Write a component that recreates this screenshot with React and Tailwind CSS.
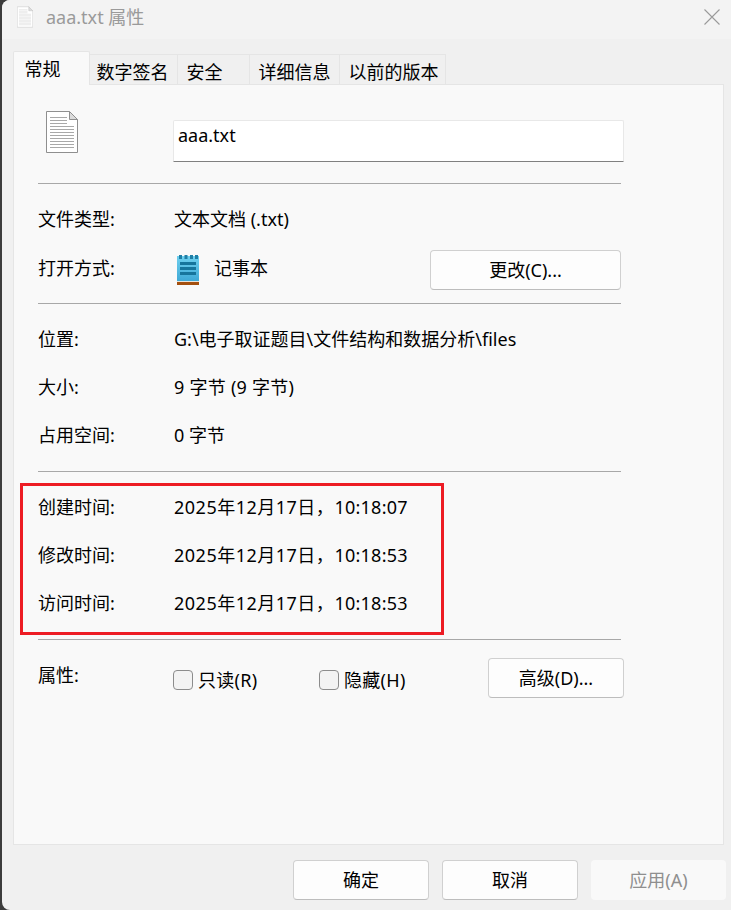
import { useState } from 'react';

const FONT = "font-['Noto_Sans','Noto_Sans_CJK_SC',sans-serif]";

const TABS = [
  { name: '数字签名', w: 'w-[88px]', pad: 'pr-[2px]' },
  { name: '安全', w: 'w-[72px]', pad: 'pr-[18px]' },
  { name: '详细信息', w: 'w-[90px]', pad: '' },
  { name: '以前的版本', w: 'w-[106px]', pad: 'pl-[2px]' },
];

const TIMES = [
  { label: '创建时间:', time: '10:18:07' },
  { label: '修改时间:', time: '10:18:53' },
  { label: '访问时间:', time: '10:18:53' },
];

function FileIcon({ className, color = '#8f8f8f', line = '#a8a8a8' }) {
  return (
    <svg className={className} viewBox="0 0 32 42" fill="none">
      <path d="M.5.5h23l8 8v33H.5z" fill="#fff" stroke={color} />
      <path d="M23.5.5v8h8z" fill="#dcdcdc" stroke={color} />
      {[6, 9, 12].map((y) => (
        <path key={y} d={`M4 ${y}.5h17`} stroke={line} />
      ))}
      {[15, 18, 21, 24, 27, 30, 33, 36].map((y) => (
        <path key={y} d={`M4 ${y}.5h24`} stroke={line} />
      ))}
    </svg>
  );
}

function NotepadIcon() {
  return (
    <svg className="ml-[3px] h-[30px] w-[23px] shrink-0" viewBox="0 0 23 30" fill="none">
      <defs>
        <linearGradient id="pad" x1="0" y1="0" x2="0" y2="1">
          <stop offset="0" stopColor="#6fd0ef" />
          <stop offset="1" stopColor="#3fa9d6" />
        </linearGradient>
      </defs>
      <rect x="0" y="1" width="22" height="25" fill="url(#pad)" />
      <path d="M2 0h3v4H2zM7.500 0h3v4h-3zM13 0h3v4h-3zM18 0h3v4h-3z" fill="#1f7fa6" />
      <path d="M3 7h16v3H3zM3 12h16v3H3zM3 17h16v3H3z" fill="#17759c" />
      <rect x="0" y="26" width="22" height="1" fill="#e8e4dc" />
      <rect x="0" y="27" width="22" height="3" fill="#a4500f" />
    </svg>
  );
}

function Button({ children, className = '' }) {
  return (
    <button
      type="button"
      className={`flex h-10 items-center justify-center rounded-[4px] border border-[#d0d0d0] border-b-[#bdbdbd] bg-[#fdfdfd] text-black ${className}`}
    >
      {children}
    </button>
  );
}

function Row({ label, children }) {
  return (
    <div className="flex h-12 items-center">
      <span className="w-[136px] shrink-0">{label}</span>
      <span>{children}</span>
    </div>
  );
}

function Check({ label, className = '' }) {
  const [checked, setChecked] = useState(false);
  return (
    <label className={`flex items-center gap-[5px] tracking-[0.3px] ${className}`}>
      <input
        type="checkbox"
        checked={checked}
        onChange={(e) => setChecked(e.target.checked)}
        className="h-5 w-5 appearance-none rounded-[4px] border border-[#8c8c8c] bg-[#f3f3f3]"
      />
      {label}
    </label>
  );
}

const Divider = () => <div className="h-px bg-[#a8a8a8]" />;

export default function App() {
  return (
    <div className={`h-[910px] w-[731px] overflow-hidden bg-[#3c3c3c] pl-[2px] text-[18px] leading-6 text-black ${FONT}`}>
      <div className="flex h-full flex-col rounded-l-lg bg-[#f0f0f0]">
        {/* barra de titulo */}
        <div className="flex h-[39px] shrink-0 items-center rounded-tl-lg bg-[#f3f3f3] pl-[15px] pr-[11px]">
          <FileIcon className="mb-[6px] h-[22px] w-4" color="#c4c4c4" line="#d0d0d0" />
          <span className="ml-[13px] pb-[6px] text-[#9a9a9a]">aaa.txt 属性</span>
          <svg className="ml-auto mb-[5px] h-4 w-4" viewBox="0 0 16 16" stroke="#9a9a9a" strokeWidth="1.100">
            <path d="M.5.5l15 15M15.500.5l-15 15" />
          </svg>
        </div>

        {/* pestañas */}
        <div className="ml-[11px] mt-3 flex h-[33px] shrink-0 items-end">
          <div className="relative z-10 -mb-px flex h-[34px] w-[77px] items-start justify-center rounded-t-[2px] border border-b-0 border-[#e5e5e5] bg-[#f9f9f9] pt-[5px] pr-[18px]">
            常规
          </div>
          {TABS.map((t) => (
            <div
              key={t.name}
              className={`flex h-[30px] items-center justify-center border border-b-0 border-l-0 border-[#e5e5e5] bg-[#f0f0f0] pt-[4px] ${t.w} ${t.pad}`}
            >
              {t.name}
            </div>
          ))}
        </div>

        {/* panel */}
        <div className="ml-[11px] mr-[7px] h-[761px] shrink-0 border border-[#e5e5e5] bg-[#f9f9f9] pl-6 pr-[102px] pt-[26px]">
          <div className="flex h-[72px] items-start">
            <div className="w-[135px] shrink-0 pl-2">
              <FileIcon className="h-[42px] w-8" />
            </div>
            <div className="mt-[9px] flex h-[42px] w-[451px] shrink-0 items-start rounded-t-[2px] border border-[#e8e8e8] border-b-[#808080] bg-white pl-1 pt-[2px]">
              aaa.txt
            </div>
          </div>
          <Divider />

          <div className="pt-[11px] pb-[13px]">
            <Row label="文件类型:">文本文档 (.txt)</Row>
            <div className="mt-[7px] flex h-10 items-center">
              <span className="w-[136px] shrink-0 pb-1">打开方式:</span>
              <NotepadIcon />
              <span className="ml-[14px] pb-1">记事本</span>
              <Button className="ml-auto w-[191px]">更改(C)...</Button>
            </div>
          </div>
          <Divider />

          <div className="pt-[11px] pb-3">
            <Row label="位置:">G:\电子取证题目\文件结构和数据分析\files</Row>
            <Row label="大小:"><span className="tracking-[0.25px]">9 字节 (9 字节)</span></Row>
            <Row label="占用空间:">0 字节</Row>
          </div>
          <Divider />

          <div className="relative pt-[11px] pb-3">
            {TIMES.map((r) => (
              <Row key={r.label} label={r.label}>
                <span className="tracking-[0.5px]">2025年12月17日，</span>
                <span className="tracking-[0.25px]">{r.time}</span>
              </Row>
            ))}
            {/* recuadro rojo de anotacion */}
            <div className="absolute left-[-18px] top-[11px] h-[152px] w-[424px] border-[3px] border-[#ed1c24]" />
          </div>
          <Divider />

          <div className="mt-[18px] flex h-10 items-start">
            <span className="w-[136px] shrink-0 pt-[5px]">属性:</span>
            <Check label="只读(R)" className="mt-[10px] w-[146px] -ml-[1px]" />
            <Check label="隐藏(H)" className="mt-[10px]" />
            <Button className="ml-auto -mr-[3px] w-[136px]">高级(D)...</Button>
          </div>
        </div>

        {/* botones */}
        <div className="mt-[15px] flex justify-end gap-[13px] pr-[5px]">
          <Button className="w-[136px]">确定</Button>
          <Button className="w-[136px]">取消</Button>
          <button type="button" className="flex h-10 w-[135px] items-center justify-center rounded-[4px] bg-[#f9f9f9] text-[#8f8f8f]">
            应用(A)
          </button>
        </div>
      </div>
    </div>
  );
}
